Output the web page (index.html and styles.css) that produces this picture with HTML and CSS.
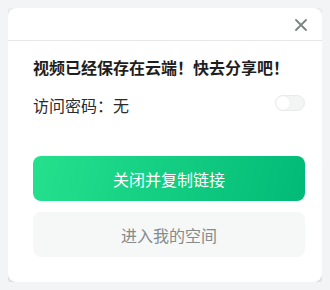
FILE: index.html
```html
<!DOCTYPE html>
<html>
	<head>
		<meta charset="UTF-8">
		<title>分享</title>
		<link rel="stylesheet" href="styles.css">
	</head>
	<body>
		<div class="dialog">
			<div class="dialog-head">
				<svg class="close" width="12" height="12" viewBox="0 0 12 12">
					<path d="M1 1L11 11M11 1L1 11" stroke="#7b8383" stroke-width="1.8" stroke-linecap="round"/>
				</svg>
			</div>
			<div class="dialog-body">
				<p class="title">视频已经保存在云端！快去分享吧！</p>
				<div class="pwd">
					<span>访问密码：无</span>
					<div class="switch"><i></i></div>
				</div>
				<div class="btn btn-main">关闭并复制链接</div>
				<div class="btn btn-sub">进入我的空间</div>
			</div>
		</div>
	</body>
</html>
```
FILE: styles.css
```css
body {
	margin: 8px;
	background-color: #f3f4f5;
	font-family: "Noto Sans CJK SC", "Noto Sans", sans-serif;
}

.dialog {
	width: 314px;
	height: 274px;
	box-sizing: border-box;
	background-color: #fff;
	border-radius: 8px;
	box-shadow: 0 1px 4px rgba(0, 0, 0, 0.22);
}

.dialog-head {
	height: 32px;
	border-bottom: 1px solid #e4e8e8;
	display: flex;
	justify-content: flex-end;
	align-items: center;
	padding-right: 15px;
}

.close {
	display: block;
	margin-top: 2px;
}

.dialog-body {
	padding: 15px 17px 0 25px;
}

.title {
	margin: 0;
	font-size: 16px;
	line-height: 22px;
	font-weight: bold;
	color: #1e1e1e;
}

.pwd {
	margin-top: 16px;
	height: 22px;
	display: flex;
	justify-content: space-between;
	align-items: center;
	font-size: 16px;
	color: #2b2b2b;
}

.switch {
	width: 28px;
	height: 14px;
	border: 1px solid #e9ecec;
	border-radius: 8px;
	background-color: #f3f5f5;
	position: relative;
	margin-top: -4px;
}

.switch i {
	position: absolute;
	left: 0;
	top: 0;
	width: 14px;
	height: 14px;
	border-radius: 50%;
	background-color: #fff;
	box-shadow: 0 0 1px rgba(0, 0, 0, 0.12);
}

.btn {
	height: 45px;
	border-radius: 8px;
	display: flex;
	justify-content: center;
	align-items: center;
	font-size: 16px;
}

.btn-main {
	margin-top: 40px;
	color: #fff;
	background: linear-gradient(105deg, #25e18d, #01ba77);
}

.btn-sub {
	margin-top: 11px;
	color: #858a8a;
	background-color: #f6f8f8;
}
```
